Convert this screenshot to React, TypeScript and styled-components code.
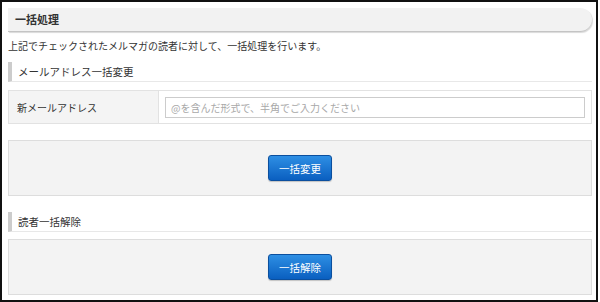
import { createGlobalStyle, styled } from 'styled-components';

const GlobalStyle = createGlobalStyle`
  html, body {
    margin: 0;
    padding: 0;
    background: #ffffff;
  }
  body {
    font-family: "Noto Sans CJK JP", "Noto Sans", sans-serif;
    color: #333333;
  }
`;

const Frame = styled.div`
  box-sizing: border-box;
  width: 598px;
  height: 302px;
  border: 2px solid #111111;
  padding: 6px 4px 0 6px;
  background: #ffffff;
`;

const TitleBar = styled.h2`
  box-sizing: border-box;
  margin: 0;
  height: 24px;
  padding: 0 0 1px 7px;
  display: flex;
  align-items: center;
  background: #f2f2f2;
  border-bottom: 1px solid #c4c4c4;
  border-radius: 0 12px 12px 0;
  box-shadow: 1px 1px 1px rgba(0, 0, 0, 0.15);
  font-size: 11px;
  font-weight: bold;
  color: #333333;
`;

const Lead = styled.p`
  margin: 6px 0 0;
  font-size: 10px;
  line-height: 16px;
  color: #333333;
`;

const SectionHeader = styled.h3<{ $top: number }>`
  box-sizing: border-box;
  margin: ${({ $top }) => $top}px 0 0;
  height: 20px;
  padding-left: 6px;
  display: flex;
  align-items: center;
  border-left: 4px solid #cccccc;
  border-bottom: 1px solid #e8e8e8;
  font-size: 10.5px;
  font-weight: normal;
  color: #333333;
`;

const FormTable = styled.div`
  box-sizing: border-box;
  margin-top: 8px;
  height: 34px;
  display: grid;
  grid-template-columns: 150px 1fr;
  border: 1px solid #e2e2e2;
`;

const LabelCell = styled.div`
  display: flex;
  align-items: center;
  padding-left: 8px;
  background: #f4f4f4;
  border-right: 1px solid #e2e2e2;
  font-size: 10px;
  color: #333333;
`;

const InputCell = styled.div`
  display: flex;
  align-items: center;
  padding: 0 6px 0 6px;
  background: #ffffff;
`;

const TextInput = styled.input`
  box-sizing: border-box;
  width: 100%;
  height: 21px;
  padding: 0 5px;
  border: 1px solid #cccccc;
  font-family: "Noto Sans CJK JP", "Noto Sans", sans-serif;
  font-size: 10px;
  color: #333333;
  outline: none;

  &::placeholder {
    color: #a8a8a8;
  }
`;

const ActionPanel = styled.div<{ $top: number }>`
  box-sizing: border-box;
  margin-top: ${({ $top }) => $top}px;
  height: 56px;
  display: flex;
  align-items: center;
  justify-content: center;
  background: #f3f3f3;
  border: 1px solid #dddddd;
`;

const BlueButton = styled.button`
  box-sizing: border-box;
  width: 64px;
  height: 26px;
  padding: 0;
  border: 1px solid #0b4f9e;
  border-radius: 3px;
  background: linear-gradient(#2e8fe4, #0a5fc0);
  box-shadow: 0 1px 1px rgba(0, 0, 0, 0.2);
  font-family: "Noto Sans CJK JP", "Noto Sans", sans-serif;
  font-size: 10.5px;
  color: #ffffff;
  cursor: pointer;
`;

const App = () => {
  return (
    <>
      <GlobalStyle />
      <Frame>
        <TitleBar>一括処理</TitleBar>
        <Lead>上記でチェックされたメルマガの読者に対して、一括処理を行います。</Lead>

        <SectionHeader $top={8}>メールアドレス一括変更</SectionHeader>
        <FormTable>
          <LabelCell>新メールアドレス</LabelCell>
          <InputCell>
            <TextInput placeholder="@を含んだ形式で、半角でご入力ください" />
          </InputCell>
        </FormTable>
        <ActionPanel $top={16}>
          <BlueButton>一括変更</BlueButton>
        </ActionPanel>

        <SectionHeader $top={16}>読者一括解除</SectionHeader>
        <ActionPanel $top={7}>
          <BlueButton>一括解除</BlueButton>
        </ActionPanel>
      </Frame>
    </>
  );
};

export default App;
